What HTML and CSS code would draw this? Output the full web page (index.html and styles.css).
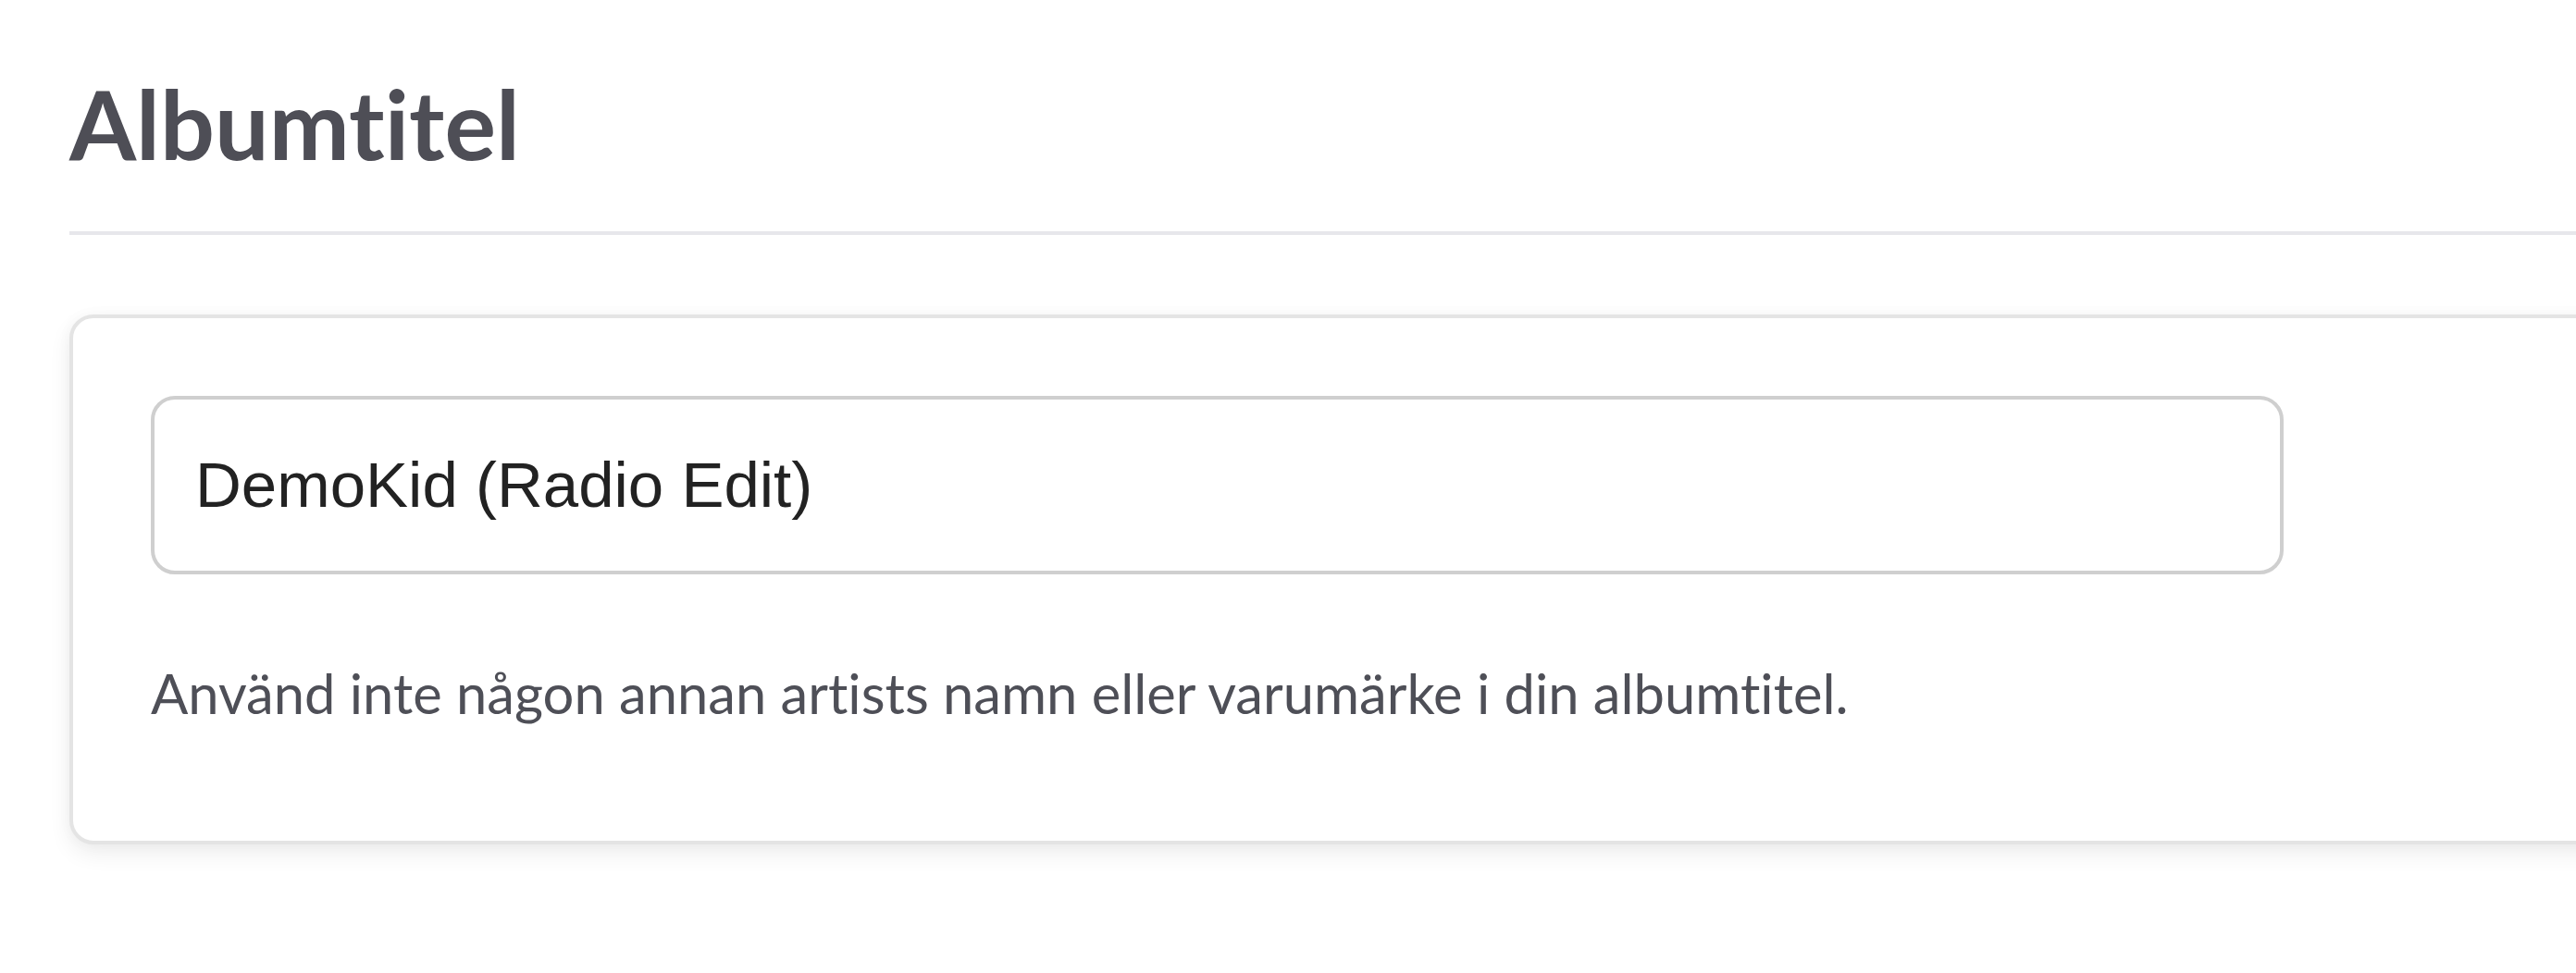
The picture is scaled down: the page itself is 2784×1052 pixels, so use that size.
FILE: index.html
```html
<!DOCTYPE html>
<html lang="sv">
<head>
<meta charset="UTF-8">
<title>Albumtitel</title>
<meta name="viewport" content="width=device-width, initial-scale=1.0">
<link rel="stylesheet" href="styles.css">
</head>
<body>

<div class="page">

<h1 class="title">Albumtitel</h1>
<hr class="divider">

<section class="card">
<input class="field" type="text" value="DemoKid (Radio Edit)">
<p class="hint">Använd inte någon annan artists namn eller varumärke i din albumtitel.</p>
</section>

</div>

</body>
</html>
```

FILE: styles.css
```css
html{overflow:hidden;background:#fff}
body{margin:0;font-family:Lato,"Noto Sans",sans-serif;color:#4e4f57;font-variant-ligatures:no-common-ligatures}
.page{padding:71px 0 120px 75px;width:2760px}
.title{margin:0;font-size:104px;font-weight:700;line-height:1.2;color:#4e4e56}
.divider{margin:54px 0 0;border:none;height:4px;background:#e7e7eb}
.card{margin-top:86px;background:#fff;border:4px solid #e4e4e4;border-radius:26px;padding:84px;box-shadow:0 10px 24px rgba(0,0,0,.07),0 0 16px rgba(0,0,0,.03)}
.field{display:block;box-sizing:border-box;width:2305px;height:193px;margin:0;padding:0 44px;border:4px solid #cfcfcf;border-radius:26px;font-family:"Liberation Sans",Arial,sans-serif;font-size:69px;color:#222;background:#fff;outline:none}
.hint{margin:93px 0 40px;font-size:59.7px;line-height:1.2}
```
